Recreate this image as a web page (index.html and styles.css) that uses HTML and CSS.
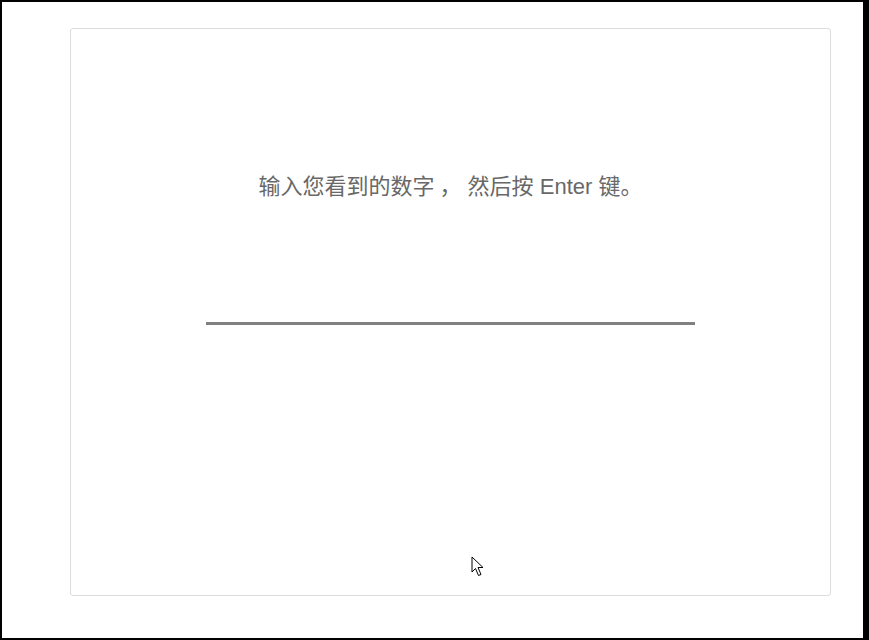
FILE: index.html
```html
<!DOCTYPE html>
<html lang="zh-CN">
<head>
<meta charset="utf-8">
<title>输入数字</title>
<link rel="stylesheet" href="styles.css">
</head>
<body>
<div class="frame">
  <div class="card">
    <p class="prompt">输入您看到的数字<span class="comma">，</span>然后按 Enter 键。</p>
    <div class="entry"></div>
    <svg class="pointer" width="14" height="22" viewBox="0 0 14 22" aria-hidden="true">
      <path d="M1 1 L1 16 L4.5 12.5 L7.5 19.5 L10 18.5 L7 11.5 L12 11.5 Z" fill="#fff" stroke="#000" stroke-width="1" stroke-linejoin="miter"/>
    </svg>
  </div>
</div>
</body>
</html>
```
FILE: styles.css
```css
html, body {
  margin: 0;
  padding: 0;
  background: #fff;
}
.frame {
  box-sizing: border-box;
  width: 869px;
  height: 640px;
  border-style: solid;
  border-color: #000;
  border-width: 2px 6px 2px 2px;
  background: #fff;
  padding: 26px 0 0 68px;
}
.card {
  position: relative;
  box-sizing: border-box;
  width: 761px;
  height: 568px;
  border: 1px solid #dcdcdc;
  border-radius: 3px;
  display: flex;
  flex-direction: column;
  align-items: center;
  padding-top: 143px;
  font-family: "Liberation Sans", "Noto Sans CJK SC", sans-serif;
}
.prompt {
  margin: 0;
  height: 30px;
  font-size: 22px;
  line-height: 30px;
  color: #686868;
}
.comma {
  font-family: "Noto Sans CJK TC", sans-serif;
  line-height: 0;
  margin: 0 6px 0 5px;
}
.entry {
  box-sizing: border-box;
  width: 489px;
  height: 40px;
  margin-top: 83px;
  border-bottom: 3px solid #808080;
}
.pointer {
  position: absolute;
  left: 400px;
  top: 527px;
}
```
